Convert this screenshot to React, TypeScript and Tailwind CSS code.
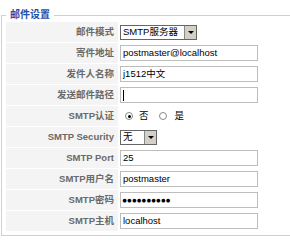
import React from 'react';

const font = "font-['Liberation_Sans','Noto_Sans_CJK_SC',sans-serif]";

const TextBox = ({ value = '', caret = false }: { value?: string; caret?: boolean }) => (
  <div className="relative flex h-[16px] w-[138px] items-center border border-[#bdbdbd] bg-white pl-[2px] text-[9.5px] leading-none text-black">
    {value}
    {caret && <span className="h-[11px] w-[1px] bg-black" />}
  </div>
);

const Dropdown = ({ value, width }: { value: string; width: string }) => (
  <div className={`flex h-[15px] items-center border border-[#666] bg-white ${width}`}>
    <span className="flex-1 pl-[2px] text-[9.5px] leading-none text-black">{value}</span>
    <span className="flex h-[13px] w-[12px] items-center justify-center border-l border-[#888] bg-[#d4d0c8]">
      <span className="h-0 w-0 border-x-[3px] border-t-[3px] border-x-transparent border-t-black" />
    </span>
  </div>
);

const Radio = ({ checked }: { checked?: boolean }) => (
  <span className="flex h-[8px] w-[8px] items-center justify-center rounded-full border border-[#888] bg-white">
    {checked && <span className="h-[3px] w-[3px] rounded-full bg-black" />}
  </span>
);

const rows: { label: string; field: React.ReactNode }[] = [
  { label: '邮件模式', field: <Dropdown value="SMTP服务器" width="w-[77px]" /> },
  { label: '寄件地址', field: <TextBox value="postmaster@localhost" /> },
  { label: '发件人名称', field: <TextBox value="j1512中文" /> },
  { label: '发送邮件路径', field: <TextBox caret /> },
  {
    label: 'SMTP认证',
    field: (
      <div className="flex items-center pl-[5px] text-[9.5px] text-black">
        <Radio checked />
        <span className="ml-[6px]">否</span>
        <span className="ml-[10px]"><Radio /></span>
        <span className="ml-[8px]">是</span>
      </div>
    ),
  },
  { label: 'SMTP Security', field: <Dropdown value="无" width="w-[37px]" /> },
  { label: 'SMTP Port', field: <TextBox value="25" /> },
  { label: 'SMTP用户名', field: <TextBox value="postmaster" /> },
  {
    label: 'SMTP密码',
    field: (
      <div className="flex h-[16px] w-[138px] items-center border border-[#bdbdbd] bg-white pl-[1px] text-[8.5px] leading-none tracking-[-0.3px] text-black">
        ●●●●●●●●●●
      </div>
    ),
  },
  { label: 'SMTP主机', field: <TextBox value="localhost" /> },
];

export default function App() {
  return (
    <div className={`h-[240px] w-[290px] overflow-hidden bg-white ${font}`}>
      <fieldset className="ml-[1px] mt-[8px] w-[310px] border border-[#d0d0d0] pb-[4px] pl-[4px]">
        <legend className="ml-0 px-[4px] text-[10px] font-bold leading-[14px] text-[#1f4ea8]">邮件设置</legend>
        <div className="flex flex-col gap-[1px]">
          {rows.map((row) => (
            <div key={row.label} className="flex h-[20px]">
              <div className="flex w-[112px] items-center justify-end bg-[#f4f4f4] pr-[4px] text-[9.5px] font-bold text-[#6a6a6a]">
                {row.label}
              </div>
              <div className="flex flex-1 items-center pl-[2px]">{row.field}</div>
            </div>
          ))}
        </div>
      </fieldset>
    </div>
  );
}
